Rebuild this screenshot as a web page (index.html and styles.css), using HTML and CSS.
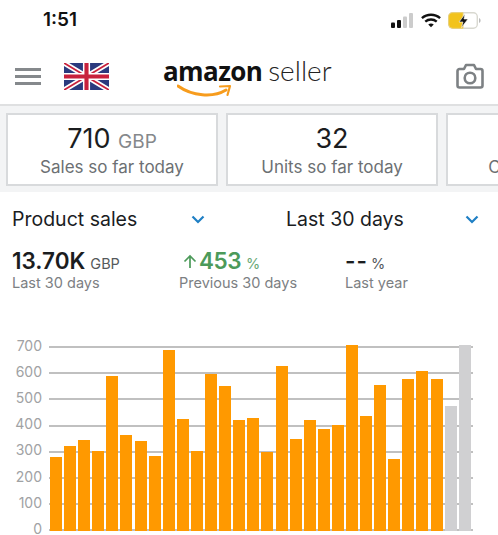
FILE: index.html
```html
<!DOCTYPE html>
<html lang="en">
<head>
<meta charset="utf-8">
<title>Amazon Seller</title>
<link rel="stylesheet" href="styles.css">
</head>
<body>
<div class="status">
  <span class="time">1:51</span>
  <div class="status-icons">
    <svg class="signal" viewBox="0 0 22 15"><rect x="0" y="9.500" width="4" height="5.500" rx="1" fill="#111"/><rect x="6" y="7" width="4" height="8" rx="1" fill="#111"/><rect x="12" y="3.500" width="4" height="11.500" rx="1" fill="#ccc"/><rect x="18" y="0" width="4" height="15" rx="1" fill="#ccc"/></svg>
    <svg class="wifi" viewBox="0 0 22 16"><path d="M1 5.500C6.700.4 15.300.4 21 5.500" fill="none" stroke="#111" stroke-width="2.600"/><path d="M4.700 9.200c3.600-3.100 9-3.100 12.600 0" fill="none" stroke="#111" stroke-width="2.600"/><path d="M8 12.400l3 3.100 3-3.100c-1.700-1.400-4.300-1.400-6 0z" fill="#111"/></svg>
    <svg class="battery" viewBox="0 0 33 17"><rect x=".7" y=".7" width="28.600" height="15.600" rx="4" fill="#fff" stroke="#d8d8d0" stroke-width="1.400"/><path d="M4.700.7H15v15.600H4.700a4 4 0 0 1-4-4V4.700a4 4 0 0 1 4-4z" fill="#f2c31d" stroke="#ecd070" stroke-width="1"/><path d="M31 6v5c1-.4 1.600-1.400 1.600-2.500S32 6.400 31 6z" fill="#bbb"/><path d="M17 2l-6 8h4l-1.500 5.500 6.500-8.500h-4z" fill="#111" stroke="#fff" stroke-width=".6"/></svg>
  </div>
</div>
<header class="topbar">
  <div class="menu"><i></i><i></i><i></i></div>
  <svg class="flag" viewBox="0 0 60 36">
    <rect width="60" height="36" fill="#2b3a7e"/>
    <path d="M0 0L60 36M60 0L0 36" stroke="#fff" stroke-width="7"/>
    <path d="M0 0L60 36M60 0L0 36" stroke="#c8213c" stroke-width="2.400"/>
    <path d="M30 0V36M0 18H60" stroke="#fff" stroke-width="9.500"/>
    <path d="M30 0V36M0 18H60" stroke="#c8213c" stroke-width="5.500"/>
  </svg>
  <div class="logo">
    <span class="logo-amazon">amazon</span><span class="logo-seller">seller</span>
    <svg class="swoosh" viewBox="0 0 56 14"><path d="M1 2c14 10 35 12 48 4" fill="none" stroke="#f79c1d" stroke-width="3" stroke-linecap="round"/><path d="M43 2.500l10-.5-2.500 9" fill="none" stroke="#f79c1d" stroke-width="2.200" stroke-linecap="round" stroke-linejoin="round"/></svg>
  </div>
  <svg class="camera" viewBox="0 0 28 26"><path d="M3.500 6H8l2-4h8l2 4h4.500A2 2 0 0 1 26.500 8v14.500a2 2 0 0 1-2 2h-21a2 2 0 0 1-2-2V8a2 2 0 0 1 2-2z" fill="none" stroke="#7d8184" stroke-width="2.600" stroke-linejoin="round"/><circle cx="14" cy="15" r="5.300" fill="none" stroke="#7d8184" stroke-width="2.600"/></svg>
</header>
<section class="strip">
  <div class="card"><div class="card-value">710 <small>GBP</small></div><div class="card-label">Sales so far today</div></div>
  <div class="card"><div class="card-value">32</div><div class="card-label">Units so far today</div></div>
  <div class="card"><div class="card-value">0.00 <small>GBP</small></div><div class="card-label">Conversion rate</div></div>
</section>
<section class="selectors">
  <div class="select sel-a"><span>Product sales</span><svg class="chev" viewBox="0 0 14 9"><path d="M1.500 1.500L7 7l5.500-5.500" fill="none" stroke="#1f7fc4" stroke-width="2.200"/></svg></div>
  <div class="select sel-b"><span>Last 30 days</span><svg class="chev" viewBox="0 0 14 9"><path d="M1.500 1.500L7 7l5.500-5.500" fill="none" stroke="#1f7fc4" stroke-width="2.200"/></svg></div>
</section>
<section class="metrics">
  <div class="metric m1"><div class="m-val"><b>13.70K</b><small>GBP</small></div><div class="m-label">Last 30 days</div></div>
  <div class="metric m2"><div class="m-val green"><svg class="up" viewBox="0 0 14 15"><path d="M7 14V2M1.500 7.500L7 2l5.500 5.500" fill="none" stroke="#4c9a5a" stroke-width="1.700"/></svg><b>453</b><small>%</small></div><div class="m-label">Previous 30 days</div></div>
  <div class="metric m3"><div class="m-val"><b class="dash">--</b><small>%</small></div><div class="m-label">Last year</div></div>
</section>
<section class="chart">
  <div class="rows">
    <div class="row"><span>700</span><i></i></div>
    <div class="row"><span>600</span><i></i></div>
    <div class="row"><span>500</span><i></i></div>
    <div class="row"><span>400</span><i></i></div>
    <div class="row"><span>300</span><i></i></div>
    <div class="row"><span>200</span><i></i></div>
    <div class="row"><span>100</span><i></i></div>
    <div class="row"><span>0</span><i></i></div>
  </div>
  <div class="bars">
    <div class="bar" style="height:74px"></div>
    <div class="bar" style="height:85px"></div>
    <div class="bar" style="height:91px"></div>
    <div class="bar" style="height:80px"></div>
    <div class="bar" style="height:155px"></div>
    <div class="bar" style="height:96px"></div>
    <div class="bar" style="height:90px"></div>
    <div class="bar" style="height:75px"></div>
    <div class="bar" style="height:181px"></div>
    <div class="bar" style="height:112px"></div>
    <div class="bar" style="height:80px"></div>
    <div class="bar" style="height:157px"></div>
    <div class="bar" style="height:145px"></div>
    <div class="bar" style="height:111px"></div>
    <div class="bar" style="height:113px"></div>
    <div class="bar" style="height:79px"></div>
    <div class="bar" style="height:165px"></div>
    <div class="bar" style="height:92px"></div>
    <div class="bar" style="height:111px"></div>
    <div class="bar" style="height:102px"></div>
    <div class="bar" style="height:106px"></div>
    <div class="bar" style="height:186px"></div>
    <div class="bar" style="height:115px"></div>
    <div class="bar" style="height:146px"></div>
    <div class="bar" style="height:72px"></div>
    <div class="bar" style="height:152px"></div>
    <div class="bar" style="height:160px"></div>
    <div class="bar" style="height:152px"></div>
    <div class="bar gray" style="height:125px"></div>
    <div class="bar gray" style="height:186px"></div>
  </div>
</section>
</body>
</html>
```
FILE: styles.css
```css
* { box-sizing: border-box; }
html, body { margin: 0; padding: 0; }
body {
  width: 498px;
  height: 535px;
  overflow: hidden;
  background: #fff;
  color: #1b1d1f;
  font-family: Inter, "Liberation Sans", sans-serif;
}
.status {
  height: 42px;
  display: flex;
  justify-content: space-between;
  align-items: flex-start;
  padding: 9px 17px 0 43px;
}
.time { font-size: 19px; font-weight: 600; line-height: 21px; color: #111; }
.status-icons { display: flex; align-items: center; gap: 7px; padding-top: 3px; }
.signal { width: 22px; height: 15px; margin-right: 1px; }
.wifi { width: 20px; height: 15px; }
.battery { width: 33px; height: 17px; }

.topbar {
  height: 62px;
  display: flex;
  align-items: flex-start;
  padding-left: 15px;
  position: relative;
}
.menu { width: 26px; margin-top: 26px; display: flex; flex-direction: column; gap: 4px; }
.menu i { display: block; height: 3px; background: #85898c; }
.flag { width: 45px; height: 27px; margin: 21px 0 0 23px; }
.logo { width: 172px; margin: 10px 0 0 54px; position: relative; white-space: nowrap; line-height: 36px; }
.logo-amazon { font-family: "Open Sans", sans-serif; font-weight: 700; font-size: 26px; letter-spacing: -.6px; color: #111; }
.logo-seller { font-family: Lato, sans-serif; font-weight: 300; font-size: 28px; margin-left: 6px; color: #222; }
.swoosh { position: absolute; left: 14px; top: 32px; width: 56px; height: 14px; }
.camera { width: 28px; height: 26px; margin: 21px 0 0 121px; }

.strip {
  height: 88px;
  background: #f3f4f5;
  border-top: 2px solid #dfe0e1;
  display: flex;
  gap: 8px;
  padding: 7px 0 0 6px;
  overflow: hidden;
}
.card {
  flex: 0 0 212px;
  height: 73px;
  background: #fff;
  border: 2px solid #d8dadc;
  text-align: center;
  padding-top: 8px;
  white-space: nowrap;
}
.card-value { height: 32px; font-size: 27px; line-height: 32px; color: #1b1d1f; }
.card-value small { font-size: 19px; line-height: 1; color: #85888b; }
.card-label { font-size: 17px; line-height: 22px; color: #6c7073; margin-top: 1px; }

.selectors { display: flex; height: 55px; padding-top: 14px; font-size: 19.500px; line-height: 26px; }
.select { display: flex; justify-content: space-between; align-items: center; height: 26px; }
.sel-a { width: 193px; margin-left: 12px; }
.sel-b { width: 193px; margin-left: 81px; }
.chev { width: 14px; height: 9px; }

.metrics { display: flex; height: 86px; padding-top: 1px; }
.metric { flex: none; }
.m1 { width: 167px; margin-left: 12px; }
.m2 { width: 166px; }
.m-val { height: 26px; line-height: 26px; display: flex; align-items: baseline; white-space: pre; }
.m-val b { font-size: 22.500px; font-weight: 600; }
.m-val small { font-size: 14.500px; color: #55595c; margin-left: 5px; }
.m-label { font-size: 14.500px; line-height: 20px; color: #7c8083; margin-top: -1px; }
.green b { color: #4c9a5a; letter-spacing: -.5px; }
.green small { color: #6aa876; }
.up { width: 14px; height: 15px; margin: 0 2px 0 4px; align-self: center; }
.dash { letter-spacing: 1px; margin-right: -2px; }

.chart { display: grid; height: 210px; margin-top: 1px; }
.rows, .bars { grid-area: 1 / 1; }
.row { display: flex; align-items: center; height: 26.200px; }
.row span { width: 42px; text-align: right; font-size: 14px; line-height: 16px; margin-bottom: 3px; color: #a0a2a4; }
.row i { display: block; width: 424px; height: 2px; margin-left: 7px; background: #c0c0c0; }
.bars { display: flex; align-items: flex-end; gap: 2.100px; padding: 0 0 13px 50px; }
.bar { flex: 0 0 12px; background: #ff9900; }
.bar.gray { background: #d0d0d2; }
```
